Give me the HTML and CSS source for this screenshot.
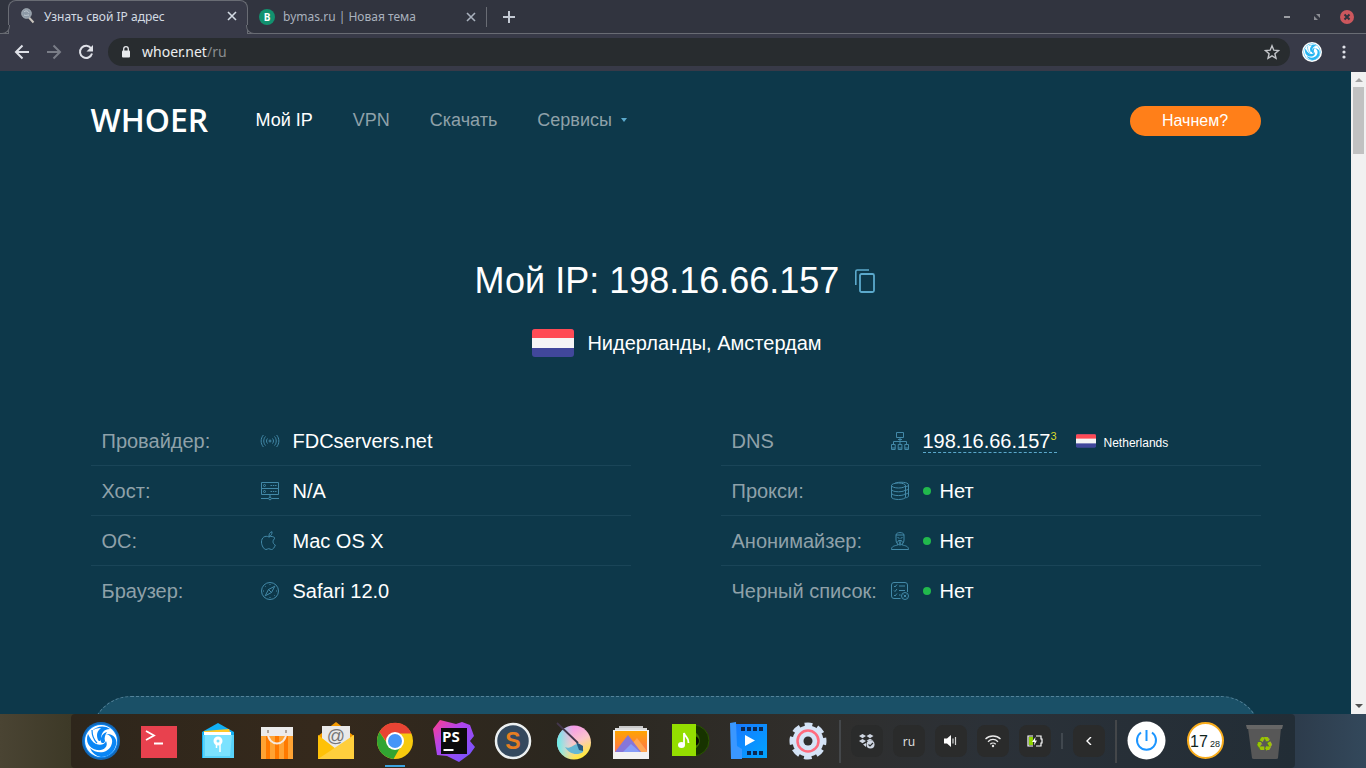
FILE: index.html
```html
<!DOCTYPE html>
<html lang="ru">
<head>
  <meta charset="UTF-8">
  <meta name="viewport" content="width=device-width, initial-scale=1.0">
  <title>Узнать свой IP адрес</title>
  <link rel="stylesheet" href="styles.css">
</head>

<body>

  <!-- shared shapes -->
  <svg class="defs" width="0" height="0" aria-hidden="true">
    <symbol id="swirl" viewBox="0 0 36 36">
      <circle cx="18" cy="18" r="17" fill="currentColor"/>
      <circle cx="18" cy="18" r="16" fill="#fff"/>
      <g fill="currentColor">
        <path d="M9 8C13 3 22 2 27 6c-6 0-9 4-9 10 0 2-2 3-3 1-2-5-1-9 3-12-4 0-7 1-9 3z"/>
        <path d="M5 11c2 4 4 8 8 10 5 2 9 0 10-3 3 6-3 10-9 9C6 26 2 18 5 11z"/>
        <path d="M7 25c6 6 17 6 21-2 3-6 0-11-5-12 7-1 12 5 10 11-2 8-8 12-15 12C13 33 9 30 7 25z"/>
        <path d="M18 19c-1-5 2-9 6-10-2 3-3 6-2 9 0 2-3 3-4 1z"/>
      </g>
      <path d="M9 7c0 6 2 10 5 13" fill="none" stroke="currentColor" stroke-width="1.200"/>
    </symbol>
    <symbol id="nl" viewBox="0 0 42 28">
      <rect width="42" height="28" rx="3" fill="#41479b"/>
      <path d="M0 10V3a3 3 0 0 1 3-3h36a3 3 0 0 1 3 3v7z" fill="#ff4b55"/>
      <path d="M0 9h42v10H0z" fill="#f5f5f5"/>
    </symbol>
  </svg>

  <div class="tabs">
    <div class="tab active">
      <svg width="16" height="16" viewBox="0 0 16 16"><path d="M9 9.500l4.500 5" stroke="#c9c4bd" stroke-width="2"/><circle cx="6.500" cy="5.500" r="4.800" fill="#8d99a6" stroke="#a9b2ba"/><path d="M4 4c2-2 4-1 5 1M4 7c2 1 3 0 5 0" stroke="#c4cdd4" fill="none"/></svg>
      <span class="tab-title">Узнать свой IP адрес</span>
      <button class="tab-close" aria-label="Закрыть"><svg width="10" height="10" viewBox="0 0 10 10"><path d="M1 1l8 8M9 1L1 9" stroke="currentColor" stroke-width="1.6"/></svg></button>
    </div>
    <div class="tab">
      <span class="favicon-b">B</span>
      <span class="tab-title">bymas.ru | Новая тема</span>
      <button class="tab-close" aria-label="Закрыть"><svg width="10" height="10" viewBox="0 0 10 10"><path d="M1 1l8 8M9 1L1 9" stroke="currentColor" stroke-width="1.6"/></svg></button>
    </div>
    <span class="tab-line"></span>
    <button class="new-tab" aria-label="Новая вкладка"><svg width="12" height="12" viewBox="0 0 12 12"><path d="M6 0v12M0 6h12" stroke="currentColor" stroke-width="2"/></svg></button>
    <div class="window-buttons">
      <button aria-label="Свернуть"><svg width="14" height="14" viewBox="0 0 14 14"><path d="M4 7h6" stroke="#9b9da3" stroke-width="2"/></svg></button>
      <button aria-label="Восстановить"><svg width="14" height="14" viewBox="0 0 14 14"><path d="M6 4h4v4zM4 6v4h4z" fill="#8b8d94"/></svg></button>
      <button aria-label="Закрыть окно"><svg width="14" height="14" viewBox="0 0 14 14"><circle cx="7" cy="7" r="7" fill="#cc575d"/><path d="M4.500 4.500l5 5M9.500 4.500l-5 5" stroke="#2f343f" stroke-width="2"/></svg></button>
    </div>
  </div>

  <div class="toolbar">
    <button aria-label="Назад"><svg width="16" height="16" viewBox="0 0 16 16"><path d="M15 8H2M8.500 1.500L2 8l6.500 6.500" fill="none" stroke="#dfe1e8" stroke-width="2"/></svg></button>
    <button aria-label="Вперёд"><svg width="16" height="16" viewBox="0 0 16 16"><path d="M1 8h13M7.500 1.500L14 8l-6.500 6.500" fill="none" stroke="#7a7d87" stroke-width="2"/></svg></button>
    <button aria-label="Обновить"><svg width="16" height="16" viewBox="0 0 16 16"><path d="M13.200 4.500A6.100 6.100 0 1 0 14 9.500" fill="none" stroke="#dfe1e8" stroke-width="2"/><path d="M15 1v6.500H8.500z" fill="#dfe1e8"/></svg></button>
    <div class="address">
      <svg width="10" height="12" viewBox="0 0 10 12"><rect x="1" y="4.500" width="8" height="7" rx="1" fill="#e8eaed"/><path d="M2.700 5V3a2.300 2.300 0 0 1 4.600 0v2" fill="none" stroke="#e8eaed" stroke-width="1.300"/></svg>
      <a href="#" class="url">whoer.net<span>/ru</span></a>
      <svg width="16" height="16" viewBox="0 0 16 16"><path d="M8 1.800l1.800 4.400 4.700.4-3.600 3.100 1.100 4.600L8 11.800l-4 2.500 1.100-4.600-3.600-3.100 4.700-.4z" fill="none" stroke="#c3c5c9" stroke-width="1.400"/></svg>
    </div>
    <span class="profile"><svg width="18" height="18"><use href="#swirl"/></svg></span>
    <button class="kebab" aria-label="Меню"><svg width="4" height="14" viewBox="0 0 4 14"><g fill="#dfe1e8"><circle cx="2" cy="2" r="1.600"/><circle cx="2" cy="7" r="1.600"/><circle cx="2" cy="12" r="1.600"/></g></svg></button>
  </div>

  <div class="viewport">
    <div class="page">
      <div class="container">
        <header>
          <a href="#" class="logo">WHOER</a>
          <nav>
            <a href="#" class="current">Мой IP</a>
            <a href="#">VPN</a>
            <a href="#">Скачать</a>
            <a href="#" class="drop">Сервисы</a>
          </nav>
          <button class="start">Начнем?</button>
        </header>

        <main>
          <h1>
            <span>Мой IP: 198.16.66.157</span>
            <button class="copy" aria-label="Копировать"><svg width="24" height="26" viewBox="0 0 24 26"><path d="M1.800 17V3.500a1.500 1.500 0 0 1 1.500-1.500H15" fill="none" stroke="#5ba9cc" stroke-width="1.600"/><rect x="6" y="6" width="14" height="18" rx="1.500" fill="none" stroke="#5ba9cc" stroke-width="1.800"/></svg></button>
          </h1>
          <p class="location"><svg width="42" height="28"><use href="#nl"/></svg>Нидерланды, Амстердам</p>

          <div class="info">
            <table>
              <tr>
                <th scope="row">Провайдер:</th>
                <td class="icon"><svg width="20" height="20" viewBox="0 0 20 20"><circle cx="10" cy="10" r="1"/><path d="M7.500 7.500c-1.300 1.500-1.300 3.500 0 5M12.500 7.500c1.300 1.500 1.300 3.500 0 5M5.500 5.500c-2.300 2.500-2.300 6.500 0 9M14.500 5.500c2.300 2.500 2.300 6.500 0 9M3.400 4c-3 3.500-3 8.500 0 12M16.600 4c3 3.500 3 8.500 0 12"/></svg></td>
                <td>FDCservers.net</td>
              </tr>
              <tr>
                <th scope="row">Хост:</th>
                <td class="icon"><svg width="20" height="20" viewBox="0 0 20 20"><path d="M1.500 1.500h17v6h-17zM1.500 7.500h17v6h-17zM1 17.500h7.500M11.500 17.500H19M10 13.500V16"/><circle cx="4.500" cy="4.500" r="1"/><circle cx="4.500" cy="10.500" r="1"/><circle cx="10" cy="17.500" r="1.300"/><path d="M10.500 4.500h6M10.500 10.500h6" stroke-dasharray="1.500 .8"/></svg></td>
                <td>N/A</td>
              </tr>
              <tr>
                <th scope="row">ОС:</th>
                <td class="icon"><svg width="20" height="20" viewBox="0 0 20 20"><path d="M9 6C5 4 1.500 6.500 1.500 11c0 3.500 2.300 7.500 4.500 7.500 1.200 0 1.500-.8 2.700-.8s1.600.8 2.800.8c1.500 0 3-2 3.800-4.500-3-1.400-3-5-.3-6.700-1.500-2-4-2.300-6-1.300zM9 5.500c-.2-2.500 1-4.300 3-4.800.2 2.300-1 4.300-3 4.800z"/></svg></td>
                <td>Mac OS X</td>
              </tr>
              <tr>
                <th scope="row">Браузер:</th>
                <td class="icon"><svg width="20" height="20" viewBox="0 0 20 20"><circle cx="10" cy="10" r="8.500"/><path d="M14.800 5.200l-3.300 6.300-6.300 3.300 3.300-6.300zM8.500 8.500l3 3M10 3v1M10 16v1M3 10h1M16 10h1M5 5l.6.6M14.400 14.400l.6.6"/></svg></td>
                <td>Safari 12.0</td>
              </tr>
            </table>

            <table>
              <tr>
                <th scope="row">DNS</th>
                <td class="icon"><svg width="20" height="20" viewBox="0 0 20 20"><path d="M6.500 1.500h7v5h-7zM10 6.500V14M3.500 14v-3.500h13V14M8 8.500h4M1.500 13.500h3.700v5H1.500zM8.200 13.500h3.700v5H8.200zM14.800 13.500h3.700v5h-3.700zM1.500 17h3.700M8.200 17h3.700M14.800 17h3.700"/></svg></td>
                <td>
                  <div class="dns">
                    <a href="#" class="dns-link">198.16.66.157<sup>3</sup></a>
                    <svg width="20" height="14"><use href="#nl"/></svg>
                    <small>Netherlands</small>
                  </div>
                </td>
              </tr>
              <tr>
                <th scope="row">Прокси:</th>
                <td class="icon"><svg width="20" height="20" viewBox="0 0 20 20"><ellipse cx="8.500" cy="4.500" rx="7" ry="2.500"/><path d="M1.500 4.500v11.500c0 3.300 14 3.300 14 0V4.500M1.500 8.300c0 3.300 14 3.300 14 0M1.500 12.100c0 3.300 14 3.300 14 0M5 2.200C9 .5 18.500 1 18.500 3.800v11c0 1-1 1.700-3 2.100M18.500 7.300c0 1-1 1.700-3 2.100M18.500 11c0 1-1 1.700-3 2.100M18.500 3.800c0 1-1 1.500-3 1.900"/></svg></td>
                <td><span class="dot"></span>Нет</td>
              </tr>
              <tr>
                <th scope="row">Анонимайзер:</th>
                <td class="icon"><svg width="20" height="20" viewBox="0 0 20 20"><path d="M6 4C6 .8 14 .8 14 4v5c0 3-2 5-4 5s-4-2-4-5zM6 4h8M7.500 6.500l2 .8M12.500 6.500l-2 .8M7.500 11.500l1-2h3l1 2M9 12h2M10 10v4M7.800 12.500v1.500c-3 .8-6.300 1-6.300 4.500h17c0-3.500-3.300-3.700-6.300-4.500v-1.500"/></svg></td>
                <td><span class="dot"></span>Нет</td>
              </tr>
              <tr>
                <th scope="row">Черный список:</th>
                <td class="icon"><svg width="20" height="20" viewBox="0 0 20 20"><path d="M10.500 17.500H4A2.500 2.500 0 0 1 1.500 15V4A2.500 2.500 0 0 1 4 1.500h11A2.500 2.500 0 0 1 17.500 4v7M4 5l1 1 2-2.500M4 9.500l1 1L7 8M4 14l1 1 2-2.500M9 5h6M9 9.500h6M9 14h1.500"/><circle cx="15" cy="15" r="3.500"/><path d="M13.700 13.700l2.600 2.600M16.300 13.700l-2.600 2.600"/></svg></td>
                <td><span class="dot"></span>Нет</td>
              </tr>
            </table>
          </div>

          <section class="panel"></section>
        </main>
      </div>
    </div>
    <div class="scrollbar">
      <span class="arrow up"></span>
      <span class="thumb"></span>
      <span class="arrow down"></span>
    </div>
  </div>

  <footer class="desktop">
    <div class="dock">
      <a href="#" class="app blue" aria-label="Меню"><svg viewBox="0 0 41 42"><circle cx="21" cy="21" r="19" fill="#1268b8"/><svg x="3" y="3" width="36" height="36"><use href="#swirl"/></svg></svg></a>
      <a href="#" class="app" aria-label="Терминал"><svg viewBox="0 0 41 42"><path d="M2 6h36v32H2z" fill="#e8414e"/><path d="M7 11l8 4.500L7 20M15 23.500h9" fill="none" stroke="#fff" stroke-width="1.800"/></svg></a>
      <a href="#" class="app" aria-label="Файлы"><svg viewBox="0 0 41 42"><path d="M4 12L20 3l16 9v26H4z" fill="#11b0f5"/><path d="M6 11l25-2 2 6H6z" fill="#ffc928"/><path d="M6 12h27v6H6z" fill="#fff"/><path d="M5 15h31v23H5z" fill="#58d3fb"/><path d="M7 15h27l-2 21H7z" fill="#7be2ff"/><circle cx="20" cy="21" r="3" fill="none" stroke="#fff" stroke-width="3"/><path d="M18.500 24v4M22 24v8" stroke="#fff" stroke-width="1.500"/></svg></a>
      <a href="#" class="app" aria-label="Магазин"><svg viewBox="0 0 41 42"><path d="M4 7h32v32H4z" fill="#ffa333"/><path d="M9 16h4v23H9zM18 16h4v23h-4zM27 16h4v23h-4z" fill="#ff7a00"/><path d="M4 7h32v9H4z" fill="#ececec"/><path d="M11 13c0 14 18 14 18 0" fill="none" stroke="#f5e9dd" stroke-width="2"/><path d="M10 10h2v3h-2zM28 10h2v3h-2z" fill="#b0a49a"/></svg></a>
      <a href="#" class="app" aria-label="Почта"><svg viewBox="0 0 41 42"><path d="M2 16L20 2l18 14v8H2z" fill="#f59a00"/><path d="M6 6h28v26H6z" fill="#e9e9e9"/><text x="20" y="22" class="at">@</text><path d="M2 15l18 14 18-14v24H2z" fill="#ffc107"/><path d="M2 39l36-24v24z" fill="#ffcf3d"/></svg></a>
      <a href="#" class="app running" aria-label="Chrome"><svg viewBox="0 0 41 42"><circle cx="20" cy="21" r="18" fill="#f7ca0e"/><path d="M4.400 12A18 18 0 0 1 36.500 13.500H20c-6 0-8.500 4-8 9z" fill="#e84434"/><path d="M4.400 12A18 18 0 0 0 18.500 39l7.500-13c-5 5-11 2.500-13.500-2z" fill="#31a432"/><circle cx="20" cy="21" r="9" fill="#fff"/><circle cx="20" cy="21" r="7" fill="#4595f8"/></svg></a>
      <a href="#" class="app" aria-label="PhpStorm"><svg viewBox="0 0 41 42"><defs><linearGradient id="ps" x2="1" y2="1"><stop offset="0" stop-color="#ff3d8b"/><stop offset=".4" stop-color="#b045f0"/><stop offset="1" stop-color="#6b57ff"/></linearGradient></defs><path d="M6 0l16 4 6-2 8 3 4 11-4 5 5 6-5 7-11 8-12-6-10-1L-1 9z" fill="url(#ps)"/><path d="M7 8h26v26H7z" fill="#0b0b0c"/><path d="M9.500 29h10v2h-10z" fill="#fff"/><text x="8" y="22" class="ps">PS</text></svg></a>
      <a href="#" class="app" aria-label="Sublime"><svg viewBox="0 0 41 42"><circle cx="20" cy="21" r="17" fill="#34495e" stroke="#ecf0f1" stroke-width="2.500"/><text x="20" y="29" class="subl">S</text></svg></a>
      <a href="#" class="app" aria-label="Krita"><svg viewBox="0 0 41 42"><defs><linearGradient id="kr" x1=".3" y1="0" x2=".8" y2="1"><stop offset="0" stop-color="#f58ff0"/><stop offset=".5" stop-color="#fbc6c9"/><stop offset="1" stop-color="#fff21c"/></linearGradient><linearGradient id="kl"><stop offset="0" stop-color="#5ff0e8"/><stop offset=".5" stop-color="#a8f0e0" stop-opacity="0"/></linearGradient></defs><circle cx="22" cy="22.500" r="17" fill="url(#kr)"/><circle cx="22" cy="22.500" r="17" fill="url(#kl)"/><path d="M13 27c5 3 9-4 14-3 3 1 5 5 4 8-6 4-14 2-18-5z" fill="#65b7d3"/><path d="M5 3l21 20" stroke="#43364b" stroke-width="1.800"/><path d="M24 22l7 4v5l-4-1z" fill="#275a80"/></svg></a>
      <a href="#" class="app" aria-label="Изображения"><svg viewBox="0 0 41 42"><defs><linearGradient id="sun" x2="0" y2="1"><stop offset="0" stop-color="#ffa400"/><stop offset="1" stop-color="#ff7350"/></linearGradient></defs><path d="M8 6h24v4H8z" fill="#c9c9c9"/><path d="M4 8h32v4H4z" fill="#ddd"/><path d="M2 10h36v29H2z" fill="#f2f2f2"/><path d="M4 11h32v21H4z" fill="url(#sun)"/><path d="M14 32l12-14 10 13v1z" fill="#ffa653"/><path d="M4 32l13-17 13 17z" fill="#8676d9"/><path d="M12 32l8-8 9 8z" fill="#879df8"/></svg></a>
      <a href="#" class="app" aria-label="Музыка"><svg viewBox="0 0 41 42"><circle cx="23.500" cy="20.500" r="15.500" fill="#173300" stroke="#2b5500"/><path d="M23 13a8 8 0 0 1 0 15" fill="none" stroke="#3e7000" stroke-width="3"/><circle cx="24" cy="21" r="5" fill="#050a02"/><path d="M2 4h24v32H2z" fill="#94de00"/><ellipse cx="11.500" cy="25" rx="3.500" ry="3" fill="#fff"/><path d="M14 25V13c1 4 5 4 4.500 10" fill="none" stroke="#fff" stroke-width="1.800"/></svg></a>
      <a href="#" class="app" aria-label="Видео"><svg viewBox="0 0 41 42"><defs><linearGradient id="mv" x2="1" y2="1"><stop offset="0" stop-color="#1777ff"/><stop offset="1" stop-color="#00a5ff"/></linearGradient></defs><path d="M6 4h32v34H6z" fill="url(#mv)"/><path d="M1 3l6-1 1 24 5 3v10H2z" fill="#3a97ff"/><path d="M12 9h22M18 33h16" stroke="#0c2852" stroke-width="4" stroke-dasharray="4 2"/><path d="M16 15l10 5.500L16 26z" fill="#fff"/></svg></a>
      <a href="#" class="app" aria-label="Настройки"><svg viewBox="0 0 41 42"><circle cx="20" cy="21" r="16" fill="none" stroke="#d3e2f5" stroke-width="5" stroke-dasharray="7.570 5" stroke-dashoffset="3.800"/><circle cx="20" cy="21" r="15.500" fill="#d6e4f7"/><circle cx="20" cy="21" r="10.500" fill="none" stroke="#ff6b7e" stroke-width="2.500"/><circle cx="20" cy="21" r="4.500" fill="#302f2f"/></svg></a>

      <span class="line"></span>

      <div class="tray">
        <button aria-label="Dropbox"><svg width="16" height="16" viewBox="0 0 16 16"><g fill="#cfd6e2"><path d="M3.500 1L7 3 3.500 5.200 0 3zM11 1l3.500 2L11 5.200 7.500 3zM3.500 6L7 8l-3.500 2.200L0 8zM11 5.700L14.500 7.500 9 8 7.500 7.500zM4 11.500l3-1.500v4z"/><circle cx="11.500" cy="11.500" r="4"/></g><path d="M9.500 11.500l1.500 1.500 3-3" fill="none" stroke="#2b2e30" stroke-width="1.200"/></svg></button>
        <button class="lang">ru</button>
        <button aria-label="Звук"><svg width="14" height="14" viewBox="0 0 14 14"><path d="M0 4.500h3l4-3.500v12l-4-3.500H0z" fill="#fff"/><path d="M9 4.500v5M11.500 3v8" stroke="#d5d5d5" stroke-width="1.200"/></svg></button>
        <button aria-label="Wi-Fi"><svg width="16" height="14" viewBox="0 0 16 14"><g fill="none" stroke="#e8e8e8" stroke-width="1.300"><path d="M.5 5c4-4 11-4 15 0M3 7.700c3-3 7-3 10 0M5.300 10.200c1.500-1.500 3.900-1.500 5.400 0"/></g><circle cx="8" cy="12" r="1.200" fill="#e8e8e8"/></svg></button>
        <button aria-label="Батарея"><svg width="16" height="12" viewBox="0 0 16 12"><path d="M2 2h4v8H2z" fill="#8fd400"/><path d="M6 1H1v10h5M9 1h5v3h1v4h-1v3H9" fill="none" stroke="#fff" stroke-width="1.200"/><path d="M8.500 2L5 7h2.500L7 10.500 10 5.500H8z" fill="#fff"/></svg></button>
        <span class="short-line"></span>
        <button aria-label="Скрыть"><svg width="6" height="8" viewBox="0 0 6 8"><path d="M5 0L1 4l4 4" fill="none" stroke="#fff" stroke-width="1.400"/></svg></button>
      </div>

      <span class="line"></span>

      <a href="#" class="app" aria-label="Выключение"><svg viewBox="0 0 41 42"><circle cx="20.500" cy="20.500" r="19" fill="#fff"/><path d="M15 12.500a9.500 9.500 0 1 0 11 0M20.500 10v11" fill="none" stroke="#1c95ff" stroke-width="2"/></svg></a>
      <a href="#" class="app" aria-label="Часы"><svg viewBox="0 0 41 42"><circle cx="20.500" cy="20.500" r="17.500" fill="#fff" stroke="#f8ac1c" stroke-width="2"/><text x="5" y="27" class="hours">17</text><text x="25" y="27" class="minutes">28</text></svg></a>
      <a href="#" class="app" aria-label="Корзина"><svg viewBox="0 0 41 42"><path d="M4 8h33l-3 30q0 1-2 1H10q-2 0-2-1z" fill="#575757"/><path d="M2 5h37l-1 4H3z" fill="#666"/><text x="20.500" y="31" class="recycle">♻</text></svg></a>
    </div>
  </footer>

</body>
</html>
```

FILE: styles.css
```css
* { box-sizing: border-box; }
body {
  margin: 0; height: 100vh; overflow: hidden;
  display: flex; flex-direction: column;
  font-family: "Liberation Sans", Arial, sans-serif;
  background-color: #0d384a; color: #fff;
}
a { color: inherit; text-decoration: none; }
button {
  margin: 0; padding: 0; border: none; background: none;
  color: inherit; font-family: inherit; cursor: pointer;
}
svg { display: block; flex: none; }
.defs { position: absolute; }

/* browser window */
.tabs {
  display: flex; align-items: center; height: 34px; padding-left: 8px;
  background-color: #31343f; border-bottom: 1px solid #696c74;
  font-family: "Noto Sans", sans-serif; font-size: 12px; color: #a9b1bd;
}
.tab {
  display: flex; align-items: center; gap: 8px;
  width: 238px; height: 34px; padding: 0 10px 0 11px;
}
.tab.active {
  position: relative; width: 240px; padding: 0 10px 2px 11px;
  background-color: #383a48; color: #d3dae3;
  border: 1px solid #696c74; border-bottom: none; border-radius: 8px 8px 0 0;
}
.tab.active::before, .tab.active::after {
  content: ""; position: absolute; bottom: 0;
  width: 8px; height: 8px; border-bottom: 1px solid #696c74;
  background-color: #31343f;
}
.tab.active::before { left: -8px; border-right: 1px solid #696c74; border-bottom-right-radius: 8px; }
.tab.active::after { right: -8px; border-left: 1px solid #696c74; border-bottom-left-radius: 8px; }
.tab-title { flex: 1; white-space: nowrap; }
.favicon-b {
  width: 16px; height: 16px; border-radius: 50%;
  background-color: #12916f; color: #fff; font-family: "Open Sans", sans-serif;
  font-size: 10px; font-weight: bold; line-height: 16px; text-align: center;
}
.tab-line { width: 1px; height: 20px; background-color: #696c74; }
.new-tab { margin-left: 16px; color: #c3c9d3; }
.window-buttons { display: flex; gap: 16px; margin-left: auto; padding-right: 12px; }

.toolbar {
  display: flex; align-items: center; gap: 16px;
  height: 37px; padding: 0 20px 2px 14px; background-color: #383a48;
  font-family: "Noto Sans", sans-serif;
}
.address {
  flex: 1; display: flex; align-items: center; gap: 11px;
  height: 28px; padding: 0 10px 0 13px; margin-left: -2px;
  border-radius: 14px; background-color: #282c2f;
}
.url { flex: 1; font-size: 14px; line-height: 28px; color: #eceef0; }
.url span { color: #8a8d90; }
.profile {
  width: 20px; height: 20px; margin-left: -4px; padding: 1px;
  border-radius: 50%; background-color: #fff; color: #29b6f2;
}
.kebab { margin-left: 4px; }

.viewport { flex: 1; display: flex; min-height: 0; }
.page { flex: 1; overflow: hidden; }
.scrollbar {
  display: flex; flex-direction: column; align-items: center;
  width: 15px; padding: 6px 0; background-color: #f1f1f1; border-top: 1px solid #383a48;
}
.thumb { width: 11px; height: 67px; margin-top: 5px; background-color: #c1c1c1; }
.arrow { border: 4px solid transparent; border-top: none; border-bottom-color: #a3a3a3; }
.arrow.down { margin-top: auto; border-top: 4px solid #505050; border-bottom: none; }

/* site */
.container { max-width: 1170px; margin: 0 auto; }
header { display: flex; align-items: center; height: 98px; }
.logo {
  width: 125px; font-family: "Open Sans", sans-serif;
  font-size: 32px; font-weight: 600; line-height: 40px;
}
nav { display: flex; gap: 40px; margin-left: 40px; font-size: 18px; color: #8fa1a9; }
nav .current { color: #fff; }
.drop { display: flex; align-items: center; gap: 9px; }
.drop::after {
  content: ""; border: 3px solid transparent;
  border-top: 4px solid #5ba9cc; border-bottom: none;
}
.start {
  width: 131px; height: 30px; margin: 2px 0 0 auto; border-radius: 15px;
  background-color: #ff7f19; font-size: 16px;
}
h1 {
  display: flex; justify-content: center; align-items: center; gap: 15px;
  margin: 90px 0 26px; padding-left: 2px;
  font-size: 36px; font-weight: normal; line-height: 44px;
}
.location {
  display: flex; justify-content: center; align-items: center; gap: 13px;
  margin: 0 0 59px; padding-left: 3px; font-size: 20px; line-height: 28px;
}
.info { display: grid; grid-template-columns: 1fr 1fr; gap: 90px; }
table { width: 100%; border-spacing: 0; table-layout: fixed; font-size: 20px; }
th, td { height: 50px; padding: 1px 0 0; border-bottom: 1px solid #1a4558; }
tr:last-child > * { border-color: transparent; }
th {
  width: 169px; padding-left: 11px;
  font-weight: normal; text-align: left; white-space: nowrap; color: #8fa1a9;
}
.icon { width: 33px; }
.icon svg { fill: none; stroke: #4389a8; stroke-width: 1; }
.dns { display: flex; align-items: center; }
.dns-link { border-bottom: 1px dashed #5ba9cc; line-height: 22px; margin-right: 19px; }
.dns-link sup { font-size: 11px; line-height: 1; color: #d9d92b; vertical-align: 8px; }
.dns small { margin: 4px 0 0 8px; font-size: 12px; }
.dot {
  display: inline-block; width: 8px; height: 8px; margin-right: 9px;
  border-radius: 50%; background-color: #21b84c; vertical-align: 3px;
}
.panel {
  height: 300px; margin-top: 80px;
  border: 1px dashed #54839a; border-radius: 40px; background-color: #1a5067;
}

/* desktop dock */
.desktop {
  display: flex; justify-content: center; height: 54px;
  background: linear-gradient(90deg, #4a4433 0, #3d3927 71px, #2d3c4c 95%, #33485b 100%);
}
.dock {
  display: flex; align-items: center; height: 54px; padding-right: 1px;
  border-radius: 4px;
  background: linear-gradient(90deg, #2e261b 0, #35291c 20%, #2b271f 40%, #302e2b 60%, #2b3138 75%, #222d36 100%);
}
.app { position: relative; width: 59px; padding: 0 9px; }
.app svg { width: 41px; height: 42px; overflow: visible; }
.app svg svg { width: 36px; height: 36px; }
.blue { color: #0a86f5; }
.running::after {
  content: ""; position: absolute; left: 19px; bottom: -5px;
  width: 20px; height: 2px; background-color: #3da4e0;
}
.line { width: 2px; height: 43px; background-color: #44474a; }
.app + .line { margin-left: 1px; }
.tray { display: flex; align-items: center; gap: 10px; padding: 0 10px; }
.tray .short-line { width: 2px; height: 16px; background-color: #41484f; }
.tray button {
  display: flex; justify-content: center; align-items: center;
  width: 32px; height: 32px; border-radius: 8px; background-color: #2a2b2b;
}
.tray .lang { font-family: "Noto Sans", sans-serif; font-size: 12px; color: #ddd; }
.at { font: 18px "Liberation Sans", sans-serif; fill: #777; text-anchor: middle; }
.ps { font: bold 15px "Open Sans", sans-serif; fill: #fff; }
.subl { font: bold 23px "Liberation Sans", sans-serif; fill: #e67e22; text-anchor: middle; }
.hours { font: 16px "Liberation Sans", sans-serif; fill: #10251d; }
.minutes { font: 9px "Liberation Sans", sans-serif; fill: #10251d; }
.recycle { font: 20px "DejaVu Sans", sans-serif; fill: #9bc400; text-anchor: middle; }
```
